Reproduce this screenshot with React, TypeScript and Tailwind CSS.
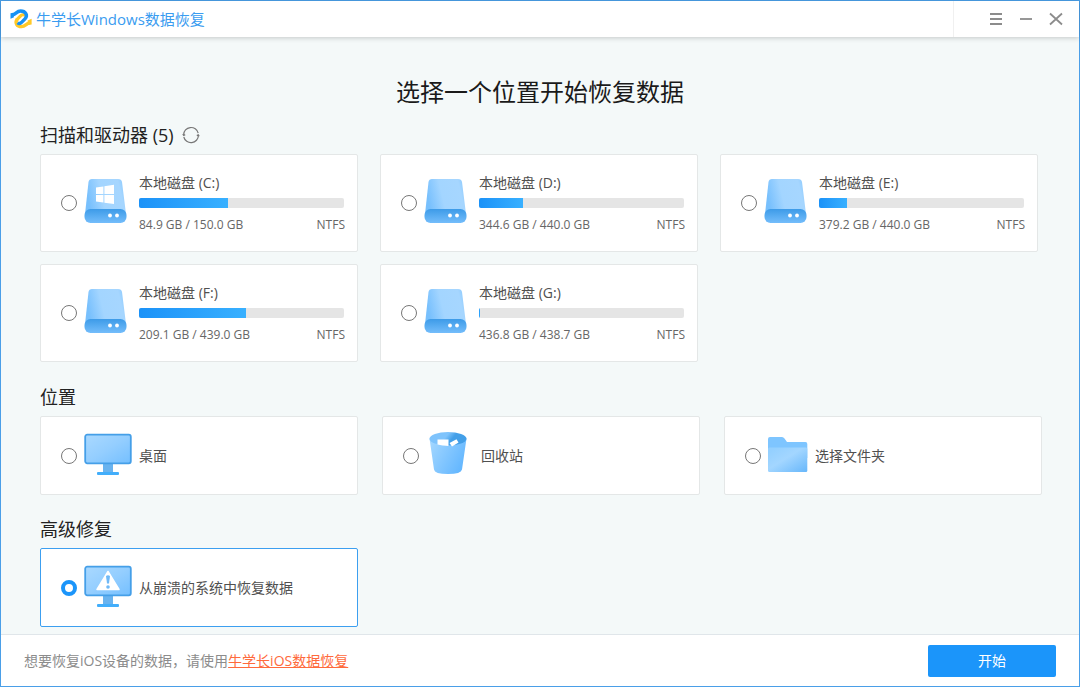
import type { ReactNode } from 'react';

interface Drive {
  letter: string;
  free: number;
  total: number;
  system?: boolean;
}

const drives: Drive[] = [
  { letter: 'C', free: 84.9, total: 150.0, system: true },
  { letter: 'D', free: 344.6, total: 440.0 },
  { letter: 'E', free: 379.2, total: 440.0 },
  { letter: 'F', free: 209.1, total: 439.0 },
  { letter: 'G', free: 436.8, total: 438.7 },
];

function Logo() {
  return (
    <svg viewBox="0 0 22 22" className="w-[22px] h-[22px]" fill="none" aria-hidden="true">
      <path d="M6.5 12.2 L10.3 8.2 C11.8 6.6 14 6.2 15.4 7.6" stroke="#ffc928" strokeWidth="3.2" />
      <path d="M19.6 15 C16.5 15.2 15.5 18.6 11.5 18.6 C6.8 18.6 4.6 14.8 7.2 11.4" stroke="#ffc928" strokeWidth="3.4" />
      <path d="M17.6 12.6 L21.6 10.8 V16.6 L18.6 17 Z" fill="#ffc928" />
      <path d="M2.6 6.8 C5.6 6.6 6.6 3 10.6 3 C15.6 3 18.2 7.4 15 10.8 L11.8 14.2 C10.5 15.6 8.8 15.8 7.6 14.8" stroke="#1592f5" strokeWidth="3.4" />
      <path d="M4 9.2 L0.5 10.8 V5.2 L3.4 4.8 Z" fill="#1592f5" />
    </svg>
  );
}

function DriveIcon({ system }: { system?: boolean }) {
  return (
    <svg viewBox="0 0 48 48" className="w-12 h-12" aria-hidden="true">
      <defs>
        <linearGradient id="driveTop" x1="0" y1="0.2" x2="1" y2="0">
          <stop offset="0" stopColor="#78c0fd" />
          <stop offset="0.35" stopColor="#a3d5ff" />
          <stop offset="0.8" stopColor="#a6d6ff" />
          <stop offset="1" stopColor="#80c4fe" />
        </linearGradient>
        <linearGradient id="driveBase" x1="0" y1="0" x2="0" y2="1">
          <stop offset="0" stopColor="#3d9be8" />
          <stop offset="1" stopColor="#74bdfb" />
        </linearGradient>
      </defs>
      <path d="M8 0 H34 Q37.5 0 38 3 L42 35 H1 L4.5 3 Q5 0 8 0 Z" fill="url(#driveTop)" />
      <rect x="0.5" y="30" width="42" height="14" rx="6" fill="url(#driveBase)" />
      <circle cx="26" cy="36.5" r="1.9" fill="#fff" />
      <circle cx="33" cy="36.5" r="1.9" fill="#fff" />
      {system && (
        <path
          d="M12 8.6 L19.4 7.4 V15 H12 Z M20.4 7.2 L30 5.8 V15 H20.4 Z M12 16 H19.4 V23.6 L12 22.4 Z M20.4 16 H30 V25 L20.4 23.7 Z"
          fill="#fff"
        />
      )}
    </svg>
  );
}

function MonitorIcon({ warning }: { warning?: boolean }) {
  return (
    <svg viewBox="0 0 48 48" className="w-12 h-12" aria-hidden="true">
      <defs>
        <linearGradient id="screen" x1="0" y1="0" x2="1" y2="1">
          <stop offset="0" stopColor="#aad9ff" />
          <stop offset="0.5" stopColor="#94ceff" />
          <stop offset="1" stopColor="#74bfff" />
        </linearGradient>
      </defs>
      <rect x="19" y="32" width="10" height="9" fill="#69b3ef" />
      <rect x="13" y="40" width="22" height="3" rx="1" fill="#42aefb" />
      <rect x="1.2" y="2.7" width="45.6" height="28.6" rx="2" fill="url(#screen)" stroke="#459fe8" strokeWidth="1.8" />
      {warning && (
        <>
          <path d="M24 7.5 L35 25.5 H13 Z" fill="#fff" stroke="#fff" strokeWidth="1.5" strokeLinejoin="round" />
          <path d="M22 12 Q24 10.5 26 12 L25 19.5 H23 Z" fill="#6fb9f7" />
          <circle cx="24" cy="23" r="1.8" fill="#6fb9f7" />
        </>
      )}
    </svg>
  );
}

function BinIcon() {
  return (
    <svg viewBox="0 0 48 48" className="w-12 h-12" aria-hidden="true">
      <defs>
        <linearGradient id="binBody" x1="0" y1="0" x2="1" y2="0.5">
          <stop offset="0" stopColor="#a6d8ff" />
          <stop offset="1" stopColor="#66b8ff" />
        </linearGradient>
        <linearGradient id="binRim" x1="0" y1="0" x2="1" y2="0.3">
          <stop offset="0.5" stopColor="#7ec3fc" />
          <stop offset="0.7" stopColor="#439fe8" />
        </linearGradient>
      </defs>
      <path d="M3.5 6.500 L8 37.5 Q8.5 42 22 42 Q35 42 36 37.5 L40.5 6.5 Z" fill="url(#binBody)" />
      <ellipse cx="22" cy="6.8" rx="18.5" ry="6.8" fill="url(#binRim)" />
      <path d="M11.5 7.4 H22.5 V14 Q16 14 11.5 12.600 Z" fill="#fff" />
      <path d="M23.5 11 L30.5 7.200 L32.5 10.6 L26 14.6 Z" fill="#fff" />
    </svg>
  );
}

function FolderIcon() {
  return (
    <svg viewBox="0 0 40 48" className="w-10 h-12" aria-hidden="true">
      <defs>
        <linearGradient id="folderFront" x1="0" y1="0" x2="1" y2="1">
          <stop offset="0.1" stopColor="#94d0ff" />
          <stop offset="0.45" stopColor="#a3d6ff" />
          <stop offset="1" stopColor="#67b7fb" />
        </linearGradient>
      </defs>
      <path d="M0 7 Q0 5 2 5 H14 Q15.5 5 16.5 6.5 L19 10 H37.5 Q39.3 10 39.3 12 V26 H0 Z" fill="#7ec5ff" />
      <path d="M0 17 Q0 15.5 1.5 15.5 H38 Q39.3 15.5 39.3 17 V38.5 Q39.3 40 38 40 H1.5 Q0 40 0 38.5 Z" fill="url(#folderFront)" />
    </svg>
  );
}

interface OptionCardProps {
  value: string;
  icon: ReactNode;
  children: ReactNode;
  tall?: boolean;
  defaultChecked?: boolean;
}

function OptionCard({ value, icon, children, tall = false, defaultChecked = false }: OptionCardProps) {
  return (
    <label
      className={`flex items-center bg-white border border-[#e4e7e7] rounded-xs pl-5 pr-3 cursor-pointer has-checked:border-[#3c9ff0] ${
        tall ? 'h-[98px]' : 'h-[79px]'
      }`}
    >
      <input
        type="radio"
        name="location"
        value={value}
        defaultChecked={defaultChecked}
        className="appearance-none shrink-0 w-4 h-4 rounded-full border border-[#777] bg-white checked:border-4 checked:border-[#1b95fa]"
      />
      <span className="shrink-0 mx-[7px]">{icon}</span>
      {children}
    </label>
  );
}

function DriveCard({ drive }: { drive: Drive }) {
  const used = ((drive.total - drive.free) / drive.total) * 100;

  return (
    <OptionCard value={drive.letter} icon={<DriveIcon system={drive.system} />} tall>
      <span className="flex-1 min-w-0">
        <span className="block text-[14px] leading-5 text-[#505050]">本地磁盘 ({drive.letter}:)</span>
        <span className="block h-[10px] mt-[5px] mb-2 mr-px rounded-xs bg-[#e5e5e5] overflow-hidden">
          <span
            className="block h-full bg-linear-to-r from-[#1b92f8] to-[#38b0ff]"
            style={{ width: `${used}%` }}
          />
        </span>
        <span className="flex justify-between text-[12px] leading-[18px] text-[#666]">
          <span>
            {drive.free.toFixed(1)} GB / {drive.total.toFixed(1)} GB
          </span>
          <span>NTFS</span>
        </span>
      </span>
    </OptionCard>
  );
}

function SectionTitle({ children }: { children: ReactNode }) {
  return <h2 className="flex items-center text-[18px] leading-6 text-[#222]">{children}</h2>;
}

export default function App() {
  return (
    <div className="min-h-screen flex flex-col border border-[#4a9fe8] bg-[#f4f9f9] font-['Open_Sans','Noto_Sans_CJK_SC',sans-serif]">
      <header className="relative flex items-center h-9 bg-white shadow-[0_1px_5px_rgba(0,0,0,0.2)]">
        <div className="flex items-center gap-1 pl-[9px]">
          <Logo />
          <span className="text-[15px] leading-5 text-[#3a9cf0]">牛学长Windows数据恢复</span>
        </div>
        <div className="ml-auto flex items-center h-full border-l border-[#f0f0f0] pl-[35px] pr-4 gap-4 text-[#8c8c8c]">
          <button type="button" aria-label="菜单">
            <svg viewBox="0 0 14 14" className="w-[14px] h-[14px]" stroke="currentColor" strokeWidth="1.8">
              <path d="M1 2 H13 M1 7 H13 M1 12 H13" />
            </svg>
          </button>
          <button type="button" aria-label="最小化">
            <svg viewBox="0 0 14 14" className="w-[14px] h-[14px]" stroke="currentColor" strokeWidth="1.8">
              <path d="M1 7 H13" />
            </svg>
          </button>
          <button type="button" aria-label="关闭">
            <svg viewBox="0 0 14 14" className="w-[14px] h-[14px]" stroke="currentColor" strokeWidth="1.8">
              <path d="M1 1.5 L13 12.5 M13 1.5 L1 12.5" />
            </svg>
          </button>
        </div>
      </header>

      <main className="flex-1 pl-[39px] pt-[39px] pb-[7px]">
        <h1 className="pr-[39px] text-center text-[24px] leading-8 text-[#1a1a1a]">选择一个位置开始恢复数据</h1>

        <section className="mt-[15px] pr-[41px]">
          <SectionTitle>
            扫描和驱动器 (5)
            <button type="button" aria-label="刷新" className="ml-2 text-[#777]">
              <svg viewBox="0 0 18 18" className="w-[18px] h-[18px]" fill="none" stroke="currentColor" strokeWidth="1.2">
                <path d="M1.6 8.8 A7.4 7.4 0 0 1 16.2 7.2 M16.4 9.4 A7.4 7.4 0 0 1 1.8 11" />
                <path d="M0.8 8 L1.7 9.4 L3.2 8.6 M17.2 10.2 L16.3 8.8 L14.8 9.6" />
              </svg>
            </button>
          </SectionTitle>
          <div className="mt-[7px] grid grid-cols-3 gap-x-[22px] gap-y-3">
            {drives.map((drive) => (
              <DriveCard key={drive.letter} drive={drive} />
            ))}
          </div>
        </section>

        <section className="mt-[23px] pr-[37px]">
          <SectionTitle>位置</SectionTitle>
          <div className="mt-[7px] grid grid-cols-3 gap-x-6">
            <OptionCard value="desktop" icon={<MonitorIcon />}>
              <span className="text-[14px] text-[#505050]">桌面</span>
            </OptionCard>
            <OptionCard value="bin" icon={<BinIcon />}>
              <span className="text-[14px] text-[#505050]">回收站</span>
            </OptionCard>
            <OptionCard value="folder" icon={<FolderIcon />}>
              <span className="text-[14px] text-[#505050]">选择文件夹</span>
            </OptionCard>
          </div>
        </section>

        <section className="mt-[22px] pr-[37px]">
          <SectionTitle>高级修复</SectionTitle>
          <div className="mt-[7px] grid grid-cols-3 gap-x-6">
            <OptionCard value="crashed" icon={<MonitorIcon warning />} defaultChecked>
              <span className="text-[14px] text-[#505050]">从崩溃的系统中恢复数据</span>
            </OptionCard>
          </div>
        </section>
      </main>

      <footer className="flex items-center justify-between h-[52px] px-[23px] bg-white border-t border-[#e0e6ea]">
        <p className="text-[14px] text-[#8c8c8c]">
          想要恢复iOS设备的数据，请使用
          <a href="#ios" className="text-[#ff6a3c] underline">
            牛学长iOS数据恢复
          </a>
        </p>
        <button type="button" className="w-32 h-8 rounded-xs bg-[#1b95fa] text-white text-[14px]">
          开始
        </button>
      </footer>
    </div>
  );
}
